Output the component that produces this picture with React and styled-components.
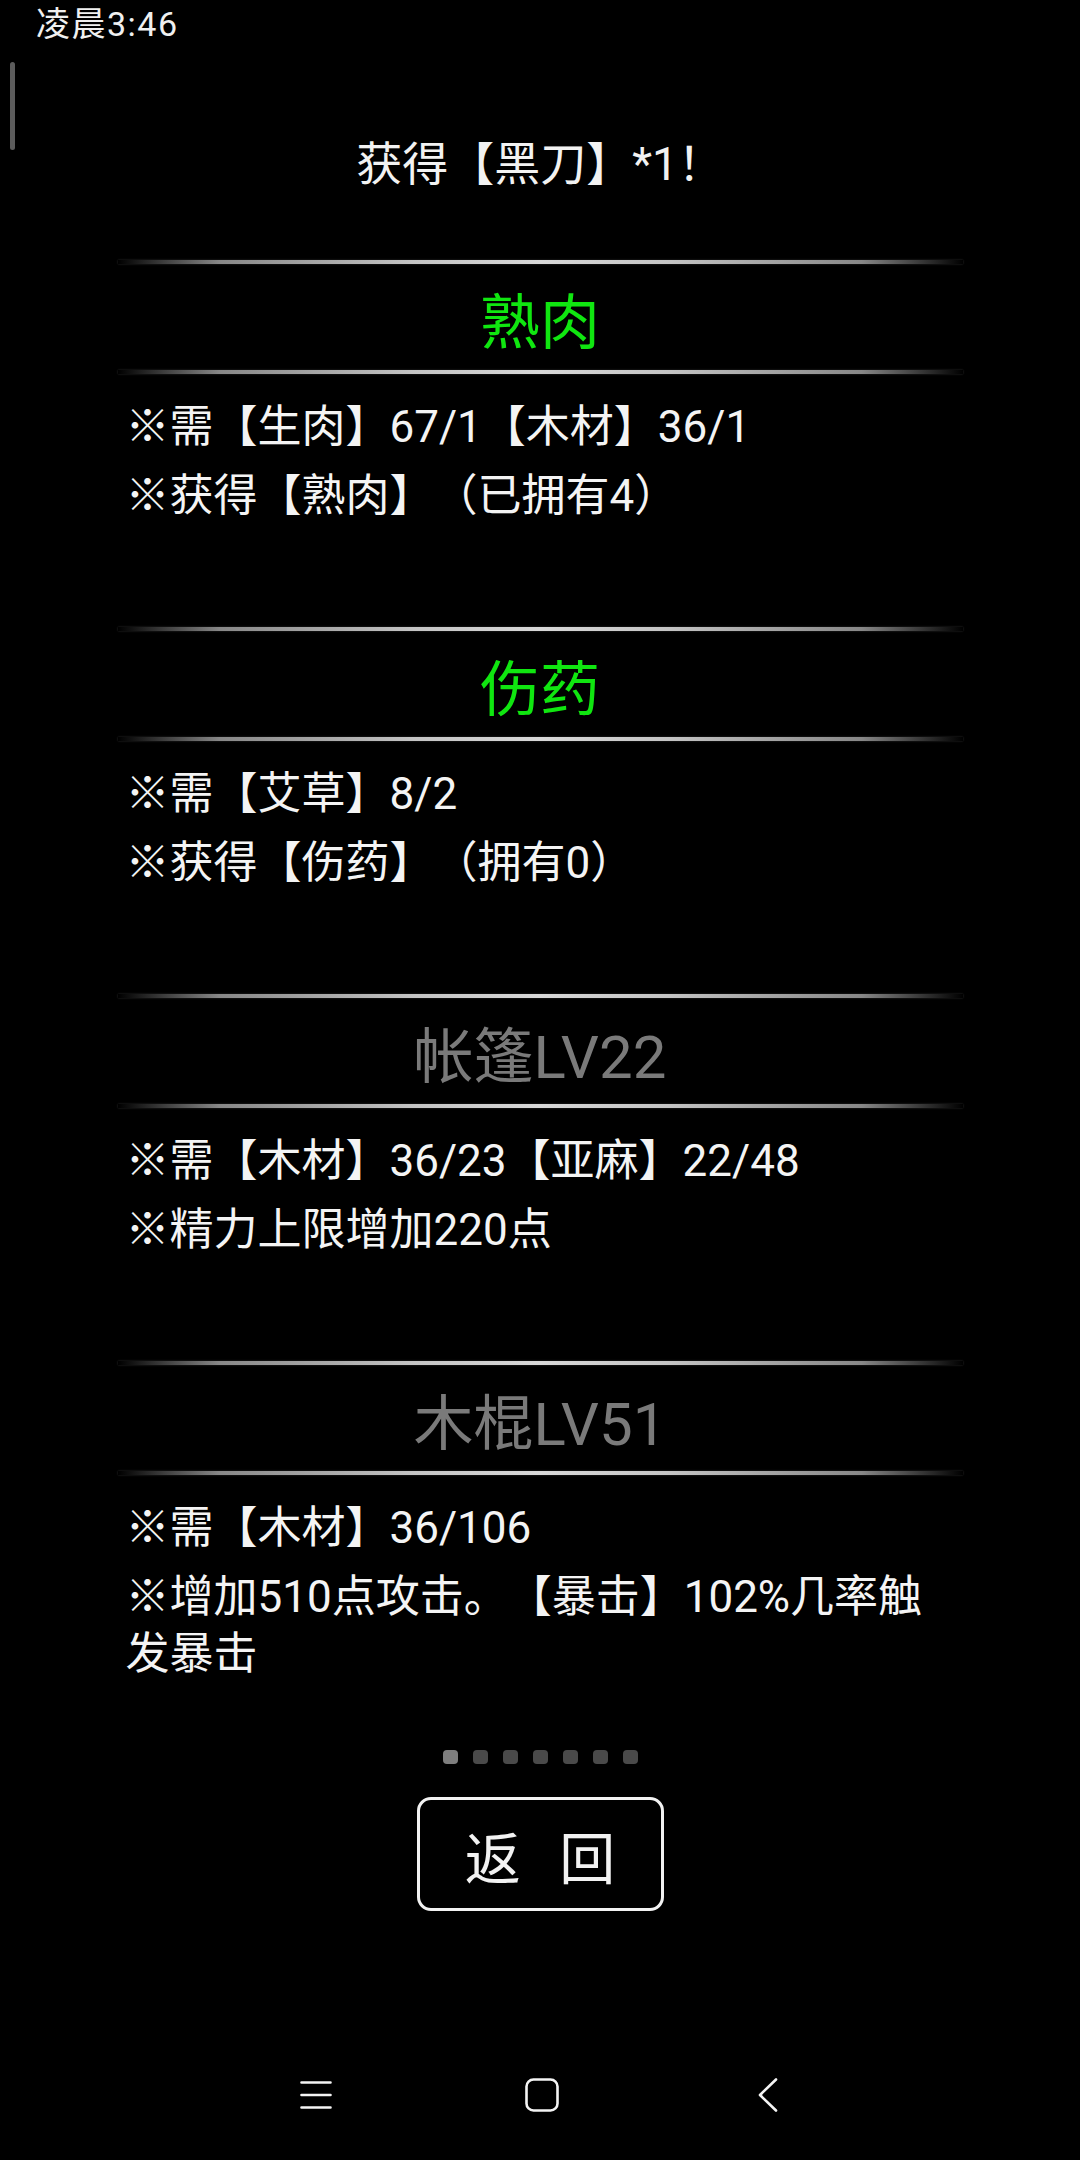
import React from 'react';
import styled, { createGlobalStyle } from 'styled-components';

const GlobalStyle = createGlobalStyle`
  html, body {
    margin: 0;
    padding: 0;
    background: #000;
  }
  body {
    font-family: Roboto, "Noto Sans CJK SC", "Noto Sans", sans-serif;
    color: #f4f4f4;
    text-spacing-trim: space-all;
  }
`;

const colors = {
  green: '#10e610',
  locked: '#7a7a7a',
  text: '#f4f4f4',
};

const Screen = styled.div`
  position: relative;
  width: 1080px;
  min-height: 2160px;
  display: flex;
  flex-direction: column;
  background: #000;
  overflow: hidden;
`;

const StatusBar = styled.div`
  height: 48px;
  line-height: 48px;
  padding-left: 36px;
  font-size: 34px;
  letter-spacing: 1.5px;
  color: #f0f0f0;
`;

const ScrollThumb = styled.div`
  position: absolute;
  left: 10px;
  top: 62px;
  width: 5px;
  height: 88px;
  border-radius: 3px;
  background: #5c5c5c;
`;

const Title = styled.h1`
  margin: 0;
  padding: 86px 0 66px;
  height: 60px;
  line-height: 60px;
  text-align: center;
  font-size: 46px;
  font-weight: 400;
  color: #f2f2f2;
`;

const List = styled.div`
  width: 845px;
  margin: 0 auto;
  display: flex;
  flex-direction: column;
`;

const Item = styled.section`
  height: 367px;
  display: flex;
  flex-direction: column;
`;

const Rule = styled.div`
  height: 4px;
  flex-shrink: 0;
  background: linear-gradient(
    to right,
    rgba(120, 120, 120, 0) 0%,
    rgba(150, 150, 150, 0.9) 12%,
    #c4c4c4 35%,
    #d8d8d8 50%,
    #c4c4c4 65%,
    rgba(150, 150, 150, 0.9) 88%,
    rgba(120, 120, 120, 0) 100%
  );
  box-shadow: 0 0 2px rgba(160, 160, 160, 0.35);
`;

const Heading = styled.div`
  height: 106px;
  display: flex;
  align-items: center;
  justify-content: center;
  font-size: 60px;
  color: ${({ $unlocked }) => ($unlocked ? colors.green : colors.locked)};
`;

const Body = styled.div`
  padding: 25px 16px 0 8px;
  display: flex;
  flex-direction: column;
  gap: 12px;
`;

const Line = styled.p`
  margin: 0;
  font-size: 44px;
  line-height: 57px;
  color: ${colors.text};
`;

const Dots = styled.div`
  margin-top: 22px;
  display: flex;
  justify-content: center;
  gap: 15px;
`;

const Dot = styled.span`
  width: 15px;
  height: 14px;
  border-radius: 4px;
  background: ${({ $active }) => ($active ? '#7e7e7e' : '#4a4a4a')};
`;

const BackButton = styled.button`
  align-self: center;
  margin-top: 33px;
  width: 247px;
  height: 114px;
  box-sizing: border-box;
  border: 3px solid #f2f2f2;
  border-radius: 14px;
  background: #000;
  color: #f2f2f2;
  font-family: "Noto Sans CJK SC", sans-serif;
  font-size: 56px;
  letter-spacing: 13px;
  padding: 0 0 0 13px;
  cursor: pointer;
`;

const NavBar = styled.nav`
  margin-top: auto;
  height: 130px;
  display: grid;
  grid-template-columns: 226px 226px 226px;
  justify-content: center;
  align-items: center;
  justify-items: center;
  padding-left: 4px;
  box-sizing: border-box;
`;

const NavIcon = styled.svg`
  display: block;
  stroke: #f4f4f4;
  fill: none;
  stroke-linecap: round;
  stroke-linejoin: round;
`;

const items = [
  {
    name: '熟肉',
    unlocked: true,
    lines: ['※需【生肉】67/1【木材】36/1', '※获得【熟肉】（已拥有4）'],
  },
  {
    name: '伤药',
    unlocked: true,
    lines: ['※需【艾草】8/2', '※获得【伤药】（拥有0）'],
  },
  {
    name: '帐篷LV22',
    unlocked: false,
    lines: ['※需【木材】36/23【亚麻】22/48', '※精力上限增加220点'],
  },
  {
    name: '木棍LV51',
    unlocked: false,
    lines: ['※需【木材】36/106', '※增加510点攻击。【暴击】102%几率触发暴击'],
  },
];

export default function App() {
  return (
    <Screen>
      <GlobalStyle />
      <StatusBar>凌晨3:46</StatusBar>
      <ScrollThumb />
      <Title>获得【黑刀】*1！</Title>
      <List>
        {items.map((item) => (
          <Item key={item.name}>
            <Rule />
            <Heading $unlocked={item.unlocked}>{item.name}</Heading>
            <Rule />
            <Body>
              {item.lines.map((line) => (
                <Line key={line}>{line}</Line>
              ))}
            </Body>
          </Item>
        ))}
      </List>
      <Dots>
        {Array.from({ length: 7 }).map((_, i) => (
          <Dot key={i} $active={i === 0} />
        ))}
      </Dots>
      <BackButton>返 回</BackButton>
      <NavBar>
        <NavIcon width="32" height="28" viewBox="0 0 32 28" strokeWidth="2.6">
          <path d="M1.5 1.5h29M1.5 14h29M1.5 26.5h29" />
        </NavIcon>
        <NavIcon width="34" height="34" viewBox="0 0 34 34" strokeWidth="2.6">
          <rect x="1.5" y="1.5" width="31" height="31" rx="7" />
        </NavIcon>
        <NavIcon width="20" height="34" viewBox="0 0 20 34" strokeWidth="2.6">
          <path d="M18 1.5L2 17l16 15.5" />
        </NavIcon>
      </NavBar>
    </Screen>
  );
}
